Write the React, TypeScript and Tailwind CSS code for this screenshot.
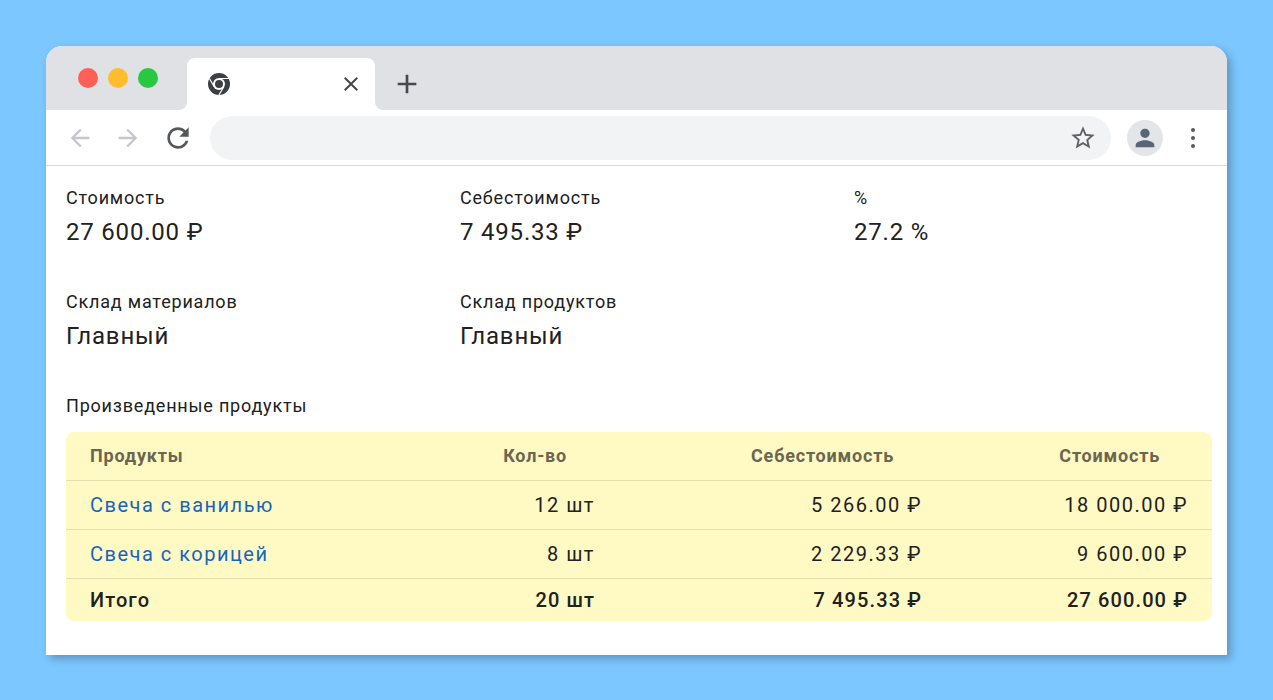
const rows = [
  { name: "Свеча с ванилью", qty: "12 шт", cost: "5 266.00 ₽", price: "18 000.00 ₽" },
  { name: "Свеча с корицей", qty: "8 шт", cost: "2 229.33 ₽", price: "9 600.00 ₽" },
];

const gridCols = "grid grid-cols-[505px_327px_266px] items-center px-6";

function Icon({ d, className }: { d: string; className: string }) {
  return (
    <svg viewBox="0 0 24 24" fill="currentColor" className={className}>
      <path d={d} />
    </svg>
  );
}

function ChromeLogo() {
  return (
    <svg viewBox="0 0 24 24" className="h-6 w-6 text-[#3c4043]">
      <circle cx="12" cy="12" r="11" fill="currentColor" />
      <circle cx="12" cy="12" r="6" fill="white" />
      <circle cx="12" cy="12" r="4" fill="currentColor" />
      <path d="M12 6.5H22M7.2 14.8L2.4 6.5M16.8 14.8L11.8 23.3" stroke="white" strokeWidth="1.2" />
    </svg>
  );
}

function Stat({ label, value }: { label: string; value: string }) {
  return (
    <div>
      <div className="text-lg text-[#212121]">{label}</div>
      <div className="mt-1 text-2xl text-[#212121]">{value}</div>
    </div>
  );
}

export default function App() {
  return (
    <div
      className="h-[700px] overflow-hidden bg-[#7cc7ff] pt-[46px] tracking-[0.8px]"
      style={{ fontFamily: "Roboto, sans-serif" }}
    >
      <div className="mx-auto w-[1181px] rounded-t-2xl bg-white shadow-[4px_4px_8px_rgba(0,0,0,0.25)]">
        {/* tab strip */}
        <div className="flex h-16 items-center rounded-t-2xl bg-[#dfe1e5] pl-8">
          <div className="flex gap-2.5">
            <div className="h-5 w-5 rounded-full bg-[#ff5f57]" />
            <div className="h-5 w-5 rounded-full bg-[#ffbd2e]" />
            <div className="h-5 w-5 rounded-full bg-[#28c840]" />
          </div>
          <div className="relative ml-7.25 flex h-13 w-[188px] items-center justify-between self-end rounded-t-lg bg-white pr-3 pl-5">
            <div className="absolute bottom-0 -left-2 h-2 w-2 bg-white">
              <div className="h-full w-full rounded-br-lg bg-[#dfe1e5]" />
            </div>
            <div className="absolute -right-2 bottom-0 h-2 w-2 bg-white">
              <div className="h-full w-full rounded-bl-lg bg-[#dfe1e5]" />
            </div>
            <ChromeLogo />
            <Icon
              d="M19 6.41L17.59 5 12 10.59 6.41 5 5 6.41 10.59 12 5 17.59 6.41 19 12 13.41 17.59 19 19 17.59 13.41 12z"
              className="h-6 w-6 text-[#45484c]"
            />
          </div>
          <Icon
            d="M19 13h-6v6h-2v-6H5v-2h6V5h2v6h6v2z"
            className="mt-3 ml-4 h-8 w-8 text-[#45484c]"
          />
        </div>

        {/* toolbar */}
        <div className="flex h-14 items-center border-b border-[#d9dadc] pr-8 pl-5">
          <div className="flex items-center gap-5">
            <Icon
              d="M20 11H7.83l5.59-5.59L12 4l-8 8 8 8 1.41-1.41L7.83 13H20v-2z"
              className="h-7 w-7 text-[#c4c6c9]"
            />
            <Icon
              d="M12 4l-1.41 1.41L16.17 11H4v2h12.17l-5.58 5.59L12 20l8-8z"
              className="h-7 w-7 text-[#c4c6c9]"
            />
            <Icon
              d="M17.65 6.35C16.2 4.9 14.21 4 12 4c-4.42 0-7.99 3.58-7.99 8s3.57 8 7.99 8c3.73 0 6.84-2.55 7.73-6h-2.08c-.82 2.33-3.04 4-5.65 4-3.31 0-6-2.69-6-6s2.69-6 6-6c1.66 0 3.14.69 4.22 1.78L13 11h7V4l-2.35 2.35z"
              className="h-8 w-8 text-[#55585c]"
            />
          </div>
          <div className="ml-4 flex h-11 flex-1 items-center justify-end rounded-full bg-[#f1f3f4] pr-3.5">
            <Icon
              d="M22 9.24l-7.19-.62L12 2 9.19 8.63 2 9.24l5.46 4.73L5.82 21 12 17.27 18.18 21l-1.63-7.03L22 9.24zM12 15.4l-3.76 2.27 1-4.28-3.32-2.88 4.38-.38L12 6.1l1.71 4.04 4.38.38-3.32 2.88 1 4.28L12 15.4z"
              className="h-7 w-7 text-[#5f6368]"
            />
          </div>
          <div className="ml-4 flex h-9 w-9 items-center justify-center rounded-full bg-[#e3e5e8]">
            <Icon
              d="M12 12c2.21 0 4-1.79 4-4s-1.79-4-4-4-4 1.79-4 4 1.79 4 4 4zm0 2c-2.67 0-8 1.34-8 4v2h16v-2c0-2.66-5.33-4-8-4z"
              className="h-7 w-7 text-[#596478]"
            />
          </div>
          <div className="ml-7 flex flex-col gap-1">
            <div className="h-1 w-1 rounded-full bg-[#55585c]" />
            <div className="h-1 w-1 rounded-full bg-[#55585c]" />
            <div className="h-1 w-1 rounded-full bg-[#55585c]" />
          </div>
        </div>

        {/* content */}
        <div className="pt-4.5 pr-[15px] pb-8.5 pl-5">
          <div className="grid grid-cols-3 gap-x-9 gap-y-10">
            <Stat label="Стоимость" value="27 600.00 ₽" />
            <Stat label="Себестоимость" value="7 495.33 ₽" />
            <Stat label="%" value="27.2 %" />
            <Stat label="Склад материалов" value="Главный" />
            <Stat label="Склад продуктов" value="Главный" />
          </div>

          <div className="mt-10 text-lg text-[#212121]">Произведенные продукты</div>

          <div className="mt-3 rounded-lg bg-[#fff9c4] text-[#212121]">
            <div className={`${gridCols} border-b border-[#e4dfae] py-2.5 text-lg font-bold text-[#6b6650]`}>
              <div className="flex justify-between pr-7">
                <span>Продукты</span>
                <span>Кол-во</span>
              </div>
              <div className="pr-7 text-right">Себестоимость</div>
              <div className="pr-7 text-right">Стоимость</div>
            </div>
            {rows.map((row) => (
              <div key={row.name} className={`${gridCols} border-b border-[#e4dfae] py-2.5 text-xl tracking-[1.5px]`}>
                <div className="flex justify-between">
                  <span className="text-[#1565c0]">{row.name}</span>
                  <span>{row.qty}</span>
                </div>
                <div className="text-right">{row.cost}</div>
                <div className="text-right">{row.price}</div>
              </div>
            ))}
            <div className={`${gridCols} h-10.5 text-xl font-medium tracking-[1.1px]`}>
              <div className="flex justify-between">
                <span>Итого</span>
                <span>20 шт</span>
              </div>
              <div className="text-right">7 495.33 ₽</div>
              <div className="text-right">27 600.00 ₽</div>
            </div>
          </div>
        </div>
      </div>
    </div>
  );
}
